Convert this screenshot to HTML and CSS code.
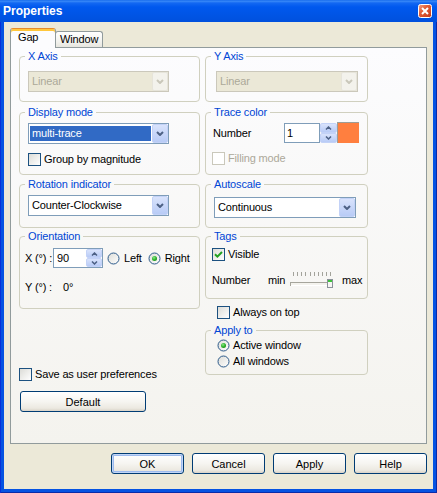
FILE: index.html
```html
<!DOCTYPE html>
<html>
<head>
<meta charset="utf-8">
<title>Properties</title>
<link rel="stylesheet" href="styles.css">
</head>
<body>
<svg class="svg-defs" width="0" height="0" aria-hidden="true">
  <defs>
    <linearGradient id="radioFill" x1="0" y1="0" x2="1" y2="1">
      <stop offset="0" stop-color="#DCDCD7"/>
      <stop offset="1" stop-color="#FFFFFF"/>
    </linearGradient>
    <radialGradient id="radioDot" cx="0.4" cy="0.35" r="0.7">
      <stop offset="0" stop-color="#8CE88A"/>
      <stop offset="0.6" stop-color="#2DB32B"/>
      <stop offset="1" stop-color="#1C8F1A"/>
    </radialGradient>
    <linearGradient id="closeFill" x1="0" y1="0" x2="1" y2="1">
      <stop offset="0" stop-color="#F3A489"/>
      <stop offset="0.4" stop-color="#E35D36"/>
      <stop offset="1" stop-color="#C23A1A"/>
    </linearGradient>
  </defs>
</svg>
<div class="window">
  <div class="titlebar">
    <span class="title">Properties</span>
    <svg class="close" width="14" height="14" viewBox="0 0 14 14">
      <rect x="0.5" y="0.5" width="13" height="13" rx="2" fill="url(#closeFill)" stroke="#FFFFFF"/>
      <path d="M4 4L10 10M10 4L4 10" stroke="#FFFFFF" stroke-width="2"/>
    </svg>
  </div>
  <div class="client">
    <div class="tabs">
      <div class="tab tab-active">Gap</div>
      <div class="tab tab-window">Window</div>
    </div>
    <div class="panel">
      <div class="col col-left">
        <fieldset class="group">
          <legend>X Axis</legend>
          <div class="b-xaxis">
            <div class="combo combo-left combo-dis">
              <span class="combo-val">Linear</span>
              <span class="combo-btn"><svg width="8" height="5" viewBox="0 0 8 5"><path d="M1 1l3 3 3-3" fill="none" stroke="#C9C7BA" stroke-width="2"/></svg></span>
            </div>
          </div>
        </fieldset>
        <fieldset class="group g-display">
          <legend>Display mode</legend>
          <div class="b-display">
            <div class="combo combo-left combo-sel">
              <span class="combo-val">multi-trace</span>
              <span class="combo-btn"><svg width="8" height="5" viewBox="0 0 8 5"><path d="M1 1l3 3 3-3" fill="none" stroke="#4D6185" stroke-width="2"/></svg></span>
            </div>
            <div class="cbrow cb-gap">
              <span class="cb"></span><span>Group by magnitude</span>
            </div>
          </div>
        </fieldset>
        <fieldset class="group g-rotation">
          <legend>Rotation indicator</legend>
          <div class="b-rotation">
            <div class="combo combo-left">
              <span class="combo-val">Counter-Clockwise</span>
              <span class="combo-btn"><svg width="8" height="5" viewBox="0 0 8 5"><path d="M1 1l3 3 3-3" fill="none" stroke="#4D6185" stroke-width="2"/></svg></span>
            </div>
          </div>
        </fieldset>
        <fieldset class="group g-orient">
          <legend>Orientation</legend>
          <div class="b-orient">
            <div class="orow">
              <span class="olabel">X (°) :</span>
              <div class="spinedit">
                <span class="spinedit-val">90</span>
                <div class="updown">
                  <span class="ud"><svg width="7" height="4" viewBox="0 0 7 4"><path d="M1 3.5l2.5-2.5 2.5 2.5" fill="none" stroke="#4D6185" stroke-width="1.5"/></svg></span>
                  <span class="ud"><svg width="7" height="4" viewBox="0 0 7 4"><path d="M1 0.5l2.5 2.5 2.5-2.5" fill="none" stroke="#4D6185" stroke-width="1.5"/></svg></span>
                </div>
              </div>
              <span class="rlabel r-left">
                <svg class="radio" width="13" height="13" viewBox="0 0 13 13"><circle cx="6.5" cy="6.5" r="5.5" fill="url(#radioFill)" stroke="#2C5A8A"/></svg>
                <span>Left</span>
              </span>
              <span class="rlabel r-right">
                <svg class="radio" width="13" height="13" viewBox="0 0 13 13"><circle cx="6.5" cy="6.5" r="5.5" fill="url(#radioFill)" stroke="#2C5A8A"/><circle cx="6.5" cy="6.5" r="2.5" fill="url(#radioDot)"/></svg>
                <span>Right</span>
              </span>
            </div>
            <div class="orow orow-y">
              <span class="ylabel">Y (°) :</span>
              <span>0°</span>
            </div>
          </div>
        </fieldset>
        <div class="cbrow save">
          <span class="cb"></span><span>Save as user preferences</span>
        </div>
        <button class="btn btn-default">Default</button>
      </div>

      <div class="col col-right">
        <fieldset class="group">
          <legend>Y Axis</legend>
          <div class="b-yaxis">
            <div class="combo combo-right combo-dis">
              <span class="combo-val">Linear</span>
              <span class="combo-btn"><svg width="8" height="5" viewBox="0 0 8 5"><path d="M1 1l3 3 3-3" fill="none" stroke="#C9C7BA" stroke-width="2"/></svg></span>
            </div>
          </div>
        </fieldset>
        <fieldset class="group g-display">
          <legend>Trace color</legend>
          <div class="b-trace">
            <div class="trow">
              <span class="tlabel">Number</span>
              <span class="edit">1</span>
              <div class="updown updown-sep">
                <span class="ud"><svg width="7" height="4" viewBox="0 0 7 4"><path d="M1 3.5l2.5-2.5 2.5 2.5" fill="none" stroke="#4D6185" stroke-width="1.5"/></svg></span>
                <span class="ud"><svg width="7" height="4" viewBox="0 0 7 4"><path d="M1 0.5l2.5 2.5 2.5-2.5" fill="none" stroke="#4D6185" stroke-width="1.5"/></svg></span>
              </div>
              <span class="swatch"></span>
            </div>
            <div class="cbrow cb-gap">
              <span class="cb cb-dis"></span><span class="dis">Filling mode</span>
            </div>
          </div>
        </fieldset>
        <fieldset class="group g-rotation">
          <legend>Autoscale</legend>
          <div class="b-autoscale">
            <div class="combo combo-right">
              <span class="combo-val">Continuous</span>
              <span class="combo-btn"><svg width="8" height="5" viewBox="0 0 8 5"><path d="M1 1l3 3 3-3" fill="none" stroke="#4D6185" stroke-width="2"/></svg></span>
            </div>
          </div>
        </fieldset>
        <fieldset class="group g-orient">
          <legend>Tags</legend>
          <div class="b-tags">
            <div class="cbrow">
              <span class="cb"><svg width="9" height="9" viewBox="0 0 9 9"><path d="M1 4.2l2.4 2.4L8 2" fill="none" stroke="#21A121" stroke-width="2"/></svg></span><span>Visible</span>
            </div>
            <div class="srow">
              <span class="slabel">Number</span>
              <span class="smin">min</span>
              <svg class="slider" width="44" height="20" viewBox="0 0 44 20">
                <path d="M3.5 2v4M7.5 2v4M11.5 2v4M15.5 2v4M20.5 2v4M24.5 2v4M28.5 2v4M32.5 2v4M36.5 2v4M40.5 2v4" stroke="#A3A39B" stroke-width="1"/>
                <rect x="0.5" y="12.5" width="42" height="3" fill="#F4F3EE" stroke="#A6A59C"/>
                <path d="M1 15.5h41" stroke="#FFFFFF"/>
                <rect x="37.5" y="9.5" width="5" height="8" fill="#F6F6F3" stroke="#8B9299"/>
                <rect x="38" y="10" width="4" height="2" fill="#3CC23A"/>
              </svg>
              <span class="smax">max</span>
            </div>
          </div>
        </fieldset>
        <div class="cbrow always">
          <span class="cb"></span><span>Always on top</span>
        </div>
        <fieldset class="group g-apply">
          <legend>Apply to</legend>
          <div class="b-apply">
            <div class="rrow">
              <svg class="radio" width="13" height="13" viewBox="0 0 13 13"><circle cx="6.5" cy="6.5" r="5.5" fill="url(#radioFill)" stroke="#2C5A8A"/><circle cx="6.5" cy="6.5" r="2.5" fill="url(#radioDot)"/></svg>
              <span>Active window</span>
            </div>
            <div class="rrow rrow-2">
              <svg class="radio" width="13" height="13" viewBox="0 0 13 13"><circle cx="6.5" cy="6.5" r="5.5" fill="url(#radioFill)" stroke="#2C5A8A"/></svg>
              <span>All windows</span>
            </div>
          </div>
        </fieldset>
      </div>
    </div>
    <div class="buttons">
      <button class="btn btn-ok">OK</button>
      <button class="btn">Cancel</button>
      <button class="btn">Apply</button>
      <button class="btn">Help</button>
    </div>
  </div>
</div>
</body>
</html>
```

FILE: styles.css
```css
* { box-sizing: border-box; }
html, body { margin: 0; padding: 0; }
body {
  font-family: "Liberation Sans", Arial, sans-serif;
  font-size: 11px;
  letter-spacing: -0.15px;
  color: #000;
  background: #fff;
}
.svg-defs { display: block; width: 0; height: 0; overflow: hidden; }

.window {
  width: 437px;
  height: 493px;
  display: flex;
  flex-direction: column;
  background: #0553E2;
  box-shadow: inset 1px 0 #0831D9, inset -1px 0 #0A2BA8, inset 0 -1px #0A2BA8;
}
.titlebar {
  flex: none;
  height: 22px;
  display: flex;
  align-items: center;
  justify-content: space-between;
  padding: 0 5px 0 3px;
  background: linear-gradient(#0A5FE8 0, #3C8CF8 1px, #1368F2 3px, #0058EE 7px, #0055E6 14px, #0050DD 100%);
}
.title {
  color: #fff;
  font-weight: bold;
  font-size: 12px;
  line-height: 14px;
  letter-spacing: 0;
}
.close { display: block; }

.client {
  flex: 1;
  margin: 0 4px 4px;
  background: #ECE9D8;
  display: flex;
  flex-direction: column;
  padding: 6px 6px 0;
}

.tabs { display: flex; align-items: flex-end; height: 19px; }
.tab {
  height: 16px;
  border: 1px solid #919B9C;
  border-bottom: none;
  border-radius: 3px 3px 0 0;
  background: linear-gradient(#FFFFFF, #F3F3EF 60%, #E7E6DF);
  line-height: 15px;
  padding-left: 4px;
}
.tab-active {
  height: 20px;
  width: 46px;
  margin-bottom: -1px;
  position: relative;
  z-index: 1;
  background: #FCFCFE;
  border-top-color: #E68B2C;
  box-shadow: inset 0 2px #FFC73C;
  line-height: 17px;
  padding-left: 7px;
}
.tab-window { width: 48px; margin-left: -1px; }

.panel {
  flex: none;
  height: 397px;
  border: 1px solid #919B9C;
  background: linear-gradient(#FCFCFE, #F4F3EE);
  display: flex;
  gap: 5px;
  padding: 2px 0 0 8px;
}
.col { display: flex; flex-direction: column; }
.col-left { width: 181px; }
.col-right { width: 163px; }

.group {
  margin: 0;
  padding: 0;
  border: 1px solid #D0D0BF;
  border-radius: 4px;
  min-width: 0;
}
.group legend {
  margin-left: 5px;
  padding: 0 3px;
  color: #0046D5;
  line-height: 13px;
}
.g-display { margin-top: 4px; }
.g-rotation { margin-top: 3px; }
.g-orient { margin-top: 2px; }
.g-apply { margin-top: 5px; }

.b-xaxis { padding: 8px 0 9px 8px; }
.b-yaxis { padding: 8px 0 9px 10px; }
.b-display { padding: 4px 0 8px 8px; }
.b-rotation { padding: 4px 0 11px 8px; }
.b-orient { padding: 5px 0 11px 5px; }
.b-trace { padding: 3px 0 9px 6px; }
.b-autoscale { padding: 6px 0 9px 8px; }
.b-tags { padding: 5px 0 8px 6px; }
.b-apply { padding: 2px 0 6px 11px; }

/* combo boxes */
.combo {
  display: flex;
  height: 21px;
  border: 1px solid #7F9DB9;
  background: #fff;
}
.combo-left { width: 141px; }
.combo-right { width: 142px; }
.combo-val {
  flex: 1;
  padding-left: 3px;
  line-height: 19px;
  white-space: nowrap;
  overflow: hidden;
}
.combo-sel .combo-val {
  margin: 2px 1px 2px 1px;
  background: #316AC5;
  color: #fff;
  line-height: 15px;
  padding-left: 2px;
}
.combo-btn {
  width: 16px;
  border: 1px solid #C3D2F7;
  border-radius: 2px;
  background: linear-gradient(#D9E3FC, #B8CBF6);
  display: flex;
  align-items: center;
  justify-content: center;
}
.combo-btn svg, .ud svg { display: block; }
.combo-dis { border-color: #CBC8BB; background: #EBE8D7; color: #ACA899; }
.combo-dis .combo-btn { background: #F3F2EC; border-color: #E6E4DA; }

/* checkboxes and radios */
.cbrow {
  display: flex;
  align-items: center;
  gap: 3px;
  height: 13px;
  line-height: 13px;
  white-space: nowrap;
}
.cb-gap { margin-top: 9px; }
.cb {
  flex: none;
  width: 13px;
  height: 13px;
  border: 1px solid #1C5180;
  background: linear-gradient(135deg, #DCDCD7, #FFFFFF);
  display: flex;
  align-items: center;
  justify-content: center;
}
.cb-dis { border-color: #CAC8BB; background: #fff; }
.dis { color: #ACA899; }
.radio { display: block; flex: none; }
.rrow {
  display: flex;
  align-items: center;
  gap: 3px;
  height: 13px;
  line-height: 13px;
}
.rrow-2 { margin-top: 3px; }

/* orientation */
.orow { display: flex; align-items: center; height: 20px; white-space: nowrap; }
.orow-y { margin-top: 9px; }
.olabel { width: 28px; }
.ylabel { width: 38px; }
.spinedit {
  display: flex;
  width: 50px;
  height: 20px;
  border: 1px solid #7F9DB9;
  background: #fff;
}
.spinedit-val { flex: 1; padding-left: 3px; line-height: 18px; }
.updown { width: 16px; display: flex; flex-direction: column; }
.ud {
  flex: 1;
  border: 1px solid #C3D2F7;
  border-radius: 2px;
  background: linear-gradient(#D9E3FC, #B8CBF6);
  display: flex;
  align-items: center;
  justify-content: center;
}
.rlabel { display: flex; align-items: center; gap: 4px; }
.r-left { margin-left: 4px; }
.r-right { margin-left: 6px; }

/* trace color */
.trow { display: flex; align-items: flex-end; height: 21px; }
.tlabel { width: 71px; margin-left: 1px; align-self: center; }
.edit {
  width: 36px;
  height: 20px;
  border: 1px solid #7F9DB9;
  background: #fff;
  padding-left: 2px;
  line-height: 18px;
}
.updown-sep { width: 17px; height: 20px; }
.swatch {
  width: 22px;
  height: 21px;
  background: #FF7F3F;
  border-top: 1px solid #9D9D96;
  border-left: 1px solid #9D9D96;
}

/* tags */
.srow { display: flex; align-items: center; height: 20px; margin-top: 9px; }
.slabel { width: 56px; }
.smin { width: 22px; }
.slider { display: block; }
.smax { margin-left: 8px; }

.always { margin: 7px 0 0 12px; }
.save { margin-top: 59px; }

/* buttons */
.btn {
  width: 73px;
  height: 21px;
  border: 1px solid #003C74;
  border-radius: 3px;
  background: linear-gradient(#FFFFFF, #F6F5F1 50%, #ECE9E1 85%, #D9D3C8);
  font: inherit;
  color: #000;
  padding: 0;
  display: flex;
  align-items: center;
  justify-content: center;
}
.btn-default { width: 126px; margin: 10px 0 0 1px; }
.btn-ok { box-shadow: inset 0 0 0 1px #C2D6F6, inset 0 0 0 2px #9DBBEE; }
.buttons {
  display: flex;
  justify-content: flex-end;
  gap: 8px;
  margin-top: 9px;
}
```
